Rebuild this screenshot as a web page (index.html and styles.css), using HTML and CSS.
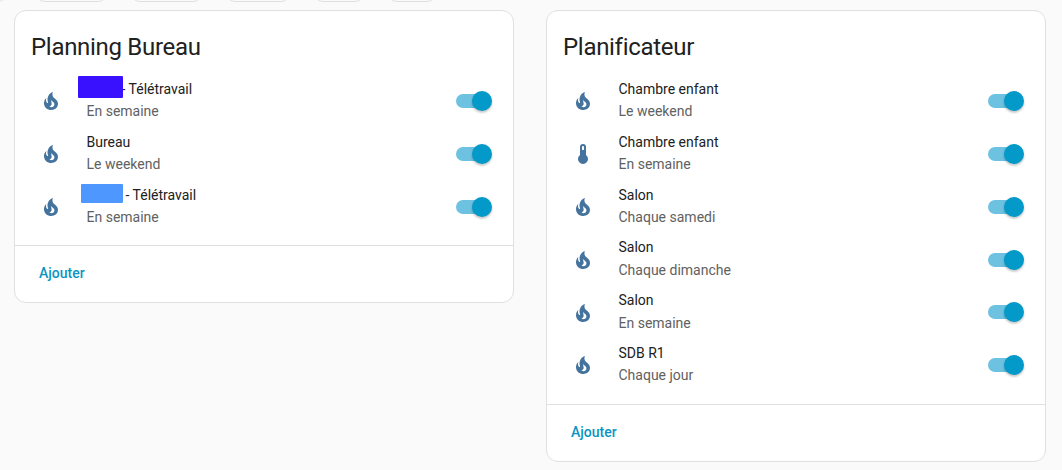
FILE: index.html
```html
<!DOCTYPE html>
<html lang="fr">
<head>
<meta charset="utf-8">
<title>Planificateur</title>
<link rel="stylesheet" href="styles.css">
</head>
<body>
<svg class="defs" width="0" height="0" aria-hidden="true">
  <symbol id="fire" viewBox="0 0 24 24"><path d="M17.66 11.2C17.43 10.9 17.15 10.64 16.89 10.38C16.22 9.78 15.46 9.35 14.82 8.72C13.33 7.26 13 4.85 13.95 3C13 3.23 12.17 3.75 11.46 4.32C8.87 6.4 7.85 10.07 9.07 13.22C9.11 13.32 9.15 13.42 9.15 13.55C9.15 13.77 9 13.97 8.8 14.05C8.57 14.15 8.33 14.09 8.14 13.93C8.08 13.88 8.04 13.83 8 13.76C6.87 12.33 6.69 10.28 7.45 8.64C5.78 10 4.87 12.3 5 14.47C5.06 14.97 5.12 15.47 5.29 15.97C5.43 16.57 5.7 17.17 6 17.7C7.08 19.43 8.95 20.67 10.96 20.92C13.1 21.19 15.39 20.8 17.03 19.32C18.86 17.66 19.5 15 18.56 12.72L18.43 12.46C18.28 12.13 17.66 11.2 17.66 11.2M14.5 17.5C14.22 17.74 13.76 18 13.4 18.1C12.28 18.5 11.16 17.94 10.5 17.28C11.69 17 12.4 16.12 12.61 15.23C12.78 14.43 12.46 13.77 12.33 13C12.21 12.26 12.23 11.63 12.5 10.94C12.69 11.32 12.89 11.7 13.13 12C13.9 13 15.11 13.44 15.37 14.8C15.41 14.94 15.43 15.08 15.43 15.23C15.46 16.05 15.1 16.95 14.5 17.5H14.5Z"/></symbol>
  <symbol id="thermo" viewBox="0 0 24 24"><path d="M15 13V5A3 3 0 0 0 9 5V13A5 5 0 1 0 15 13M12 4A1 1 0 0 1 13 5V8H11V5A1 1 0 0 1 12 4Z"/></symbol>
</svg>
<div class="chips">
  <span class="chip chip-1"></span>
  <span class="chip chip-2"></span>
  <span class="chip chip-3"></span>
  <span class="chip chip-4"></span>
  <span class="chip chip-5"></span>
  <span class="chip chip-6"></span>
</div>
<main class="columns">
  <section class="card">
    <h1 class="card-title">Planning Bureau</h1>
    <ul class="rows">
      <li class="row">
        <svg class="icon"><use href="#fire"/></svg>
        <div class="text">
          <div class="primary"><span class="mask mask-violet"></span><span class="after-violet">- Télétravail</span></div>
          <div class="secondary">En semaine</div>
        </div>
        <span class="toggle"><span class="thumb"></span></span>
      </li>
      <li class="row">
        <svg class="icon"><use href="#fire"/></svg>
        <div class="text">
          <div class="primary">Bureau</div>
          <div class="secondary">Le weekend</div>
        </div>
        <span class="toggle"><span class="thumb"></span></span>
      </li>
      <li class="row">
        <svg class="icon"><use href="#fire"/></svg>
        <div class="text">
          <div class="primary"><span class="mask mask-blue"></span><span class="after-blue">- Télétravail</span></div>
          <div class="secondary">En semaine</div>
        </div>
        <span class="toggle"><span class="thumb"></span></span>
      </li>
    </ul>
    <div class="actions"><span class="add">Ajouter</span></div>
  </section>
  <section class="card">
    <h1 class="card-title">Planificateur</h1>
    <ul class="rows">
      <li class="row">
        <svg class="icon"><use href="#fire"/></svg>
        <div class="text">
          <div class="primary">Chambre enfant</div>
          <div class="secondary">Le weekend</div>
        </div>
        <span class="toggle"><span class="thumb"></span></span>
      </li>
      <li class="row">
        <svg class="icon"><use href="#thermo"/></svg>
        <div class="text">
          <div class="primary">Chambre enfant</div>
          <div class="secondary">En semaine</div>
        </div>
        <span class="toggle"><span class="thumb"></span></span>
      </li>
      <li class="row">
        <svg class="icon"><use href="#fire"/></svg>
        <div class="text">
          <div class="primary">Salon</div>
          <div class="secondary">Chaque samedi</div>
        </div>
        <span class="toggle"><span class="thumb"></span></span>
      </li>
      <li class="row">
        <svg class="icon"><use href="#fire"/></svg>
        <div class="text">
          <div class="primary">Salon</div>
          <div class="secondary">Chaque dimanche</div>
        </div>
        <span class="toggle"><span class="thumb"></span></span>
      </li>
      <li class="row">
        <svg class="icon"><use href="#fire"/></svg>
        <div class="text">
          <div class="primary">Salon</div>
          <div class="secondary">En semaine</div>
        </div>
        <span class="toggle"><span class="thumb"></span></span>
      </li>
      <li class="row">
        <svg class="icon"><use href="#fire"/></svg>
        <div class="text">
          <div class="primary">SDB R1</div>
          <div class="secondary">Chaque jour</div>
        </div>
        <span class="toggle"><span class="thumb"></span></span>
      </li>
    </ul>
    <div class="actions"><span class="add">Ajouter</span></div>
  </section>
</main>
</body>
</html>
```
FILE: styles.css
```css
* { box-sizing: border-box; }
html, body { margin: 0; padding: 0; }
body {
  background: #fafafa;
  font-family: Roboto, "Liberation Sans", sans-serif;
  color: #212121;
  height: 470px;
  overflow: hidden;
}
.defs { position: absolute; }
.chips {
  display: flex;
  align-items: flex-end;
  height: 2px;
  margin-left: -27px;
  gap: 22px;
}
.chip {
  flex: none;
  height: 30px;
  background: #fafafa;
  border: 1px solid #e0e0e0;
  border-radius: 0 0 10px 10px;
}
.chip-1 { width: 35px; margin-right: 5px; }
.chip-2 { width: 73px; }
.chip-3 { width: 73px; }
.chip-4 { width: 66px; }
.chip-5 { width: 52px; }
.chip-6 { width: 50px; }
.columns {
  display: flex;
  align-items: flex-start;
  gap: 32px;
  padding: 8px 14px 0;
}
.card {
  width: 500px;
  background: #fff;
  border: 1px solid #e0e0e0;
  border-radius: 12px;
}
.card-title {
  margin: 0;
  padding: 20px 16px 11px;
  font-size: 24px;
  line-height: 32px;
  font-weight: 400;
  letter-spacing: -0.3px;
  color: #212121;
}
.rows {
  list-style: none;
  margin: 0;
  padding: 0 0 13px;
}
.row {
  display: flex;
  align-items: flex-start;
  height: 52.8px;
  padding: 0 23px 0 24px;
}
.icon {
  flex: none;
  width: 24px;
  height: 24px;
  fill: #44739e;
  margin-top: 15.4px;
}
.text {
  flex: 1;
  margin-left: 23.5px;
  padding-top: 5px;
  font-size: 14px;
}
.primary {
  position: relative;
  line-height: 20px;
  color: #212121;
}
.secondary {
  line-height: 20px;
  margin-top: 2.4px;
  color: #616161;
}
.mask {
  position: absolute;
  border-radius: 1px;
}
.mask-violet {
  left: -8.5px;
  top: -3px;
  width: 45px;
  height: 22px;
  background: #3a11ff;
}
.after-violet { margin-left: 35px; }
.mask-blue {
  left: -5.5px;
  top: -0.6px;
  width: 42px;
  height: 19px;
  background: #4e97ff;
}
.after-blue { margin-left: 39px; }
.toggle {
  position: relative;
  flex: none;
  width: 34px;
  height: 14px;
  border-radius: 7px;
  background: #6cc2e0;
  margin-top: 20.2px;
}
.thumb {
  position: absolute;
  right: -2px;
  top: -3px;
  width: 20px;
  height: 20px;
  border-radius: 50%;
  background: #0399c8;
  box-shadow: 0 2px 2px rgba(0, 0, 0, 0.14), 0 1px 3px rgba(0, 0, 0, 0.12);
}
.actions {
  height: 57px;
  border-top: 1px solid #e0e0e0;
  padding: 0 24px 2px;
  display: flex;
  align-items: center;
}
.add {
  font-size: 14px;
  font-weight: 500;
  color: #0a94c0;
}
```
